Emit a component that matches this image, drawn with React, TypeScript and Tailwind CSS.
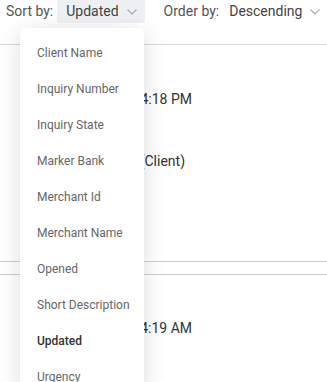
import React from 'react';

const sortFields = [
  'Client Name',
  'Inquiry Number',
  'Inquiry State',
  'Marker Bank',
  'Merchant Id',
  'Merchant Name',
  'Opened',
  'Short Description',
  'Updated',
  'Urgency',
];

function Chevron() {
  return (
    <svg width="10" height="6" viewBox="0 0 10 6" className="shrink-0">
      <polyline points="0.5,0.5 5,5 9.5,0.5" fill="none" stroke="#a3a9b8" strokeWidth="1.1" />
    </svg>
  );
}

function Select({ value, open }: { value: string; open?: boolean }) {
  return (
    <div
      className={
        'flex h-[23px] shrink-0 items-center whitespace-nowrap pl-[9px] pr-[8px] rounded-b-[3px] ' +
        (open ? 'bg-[#eef0f3]' : '')
      }
    >
      <span className="text-[#444]">{value}</span>
      <span className="ml-[8px] mt-[1px]">
        <Chevron />
      </span>
    </div>
  );
}

function Card({ lines, h }: { lines: { w: string; text: string; mt: string }[]; h: string }) {
  return (
    <div className={h + ' flow-root overflow-hidden border-b border-[#cfcfcf]'}>
      {lines.map((l, i) => (
        <div key={i} className={l.mt + ' ' + l.w + ' text-right text-[14px] leading-[18px] text-[#333] whitespace-nowrap'}>
          {l.text}
        </div>
      ))}
    </div>
  );
}

export default function App() {
  return (
    <div
      className="relative w-[327px] h-[382px] overflow-hidden bg-white text-[14px]"
      style={{ fontFamily: 'Roboto, "Liberation Sans", sans-serif' }}
    >
      {/* toolbar */}
      <div className="h-[45px] border-b border-[#d6d6d6]">
        <div className="flex items-center whitespace-nowrap pl-[6px] text-[#555]">
          <span className="shrink-0">Sort by:</span>
          <div className="ml-[4px]">
            <Select value="Updated" open />
          </div>
          <span className="ml-[19px] shrink-0">Order by:</span>
          <div className="ml-[1px]">
            <Select value="Descending" />
          </div>
        </div>
      </div>

      {/* list behind the menu */}
      <Card
        h="h-[217px]"
        lines={[
          { w: 'w-[192px]', text: '03/14/2023 4:18 PM', mt: 'mt-[45px]' },
          { w: 'w-[185px]', text: 'Maria Lopez (Client)', mt: 'mt-[44px]' },
        ]}
      />
      <div className="h-[13px] border-b border-[#cfcfcf]" />
      <Card
        h="h-[216px]"
        lines={[
          { w: 'w-[192px]', text: '03/13/2023 4:19 AM', mt: 'mt-[44px]' },
          { w: 'w-[185px]', text: 'Daniel Reyes (Client)', mt: 'mt-[44px]' },
        ]}
      />

      {/* dropdown menu */}
      <div className="absolute left-[20px] top-[28px] w-[124px] rounded-[5px] bg-white pt-[7px] shadow-[0_4px_22px_rgba(0,0,0,0.14)]">
        {sortFields.map((f) => (
          <div
            key={f}
            className={
              'flex h-[36px] items-center pl-[17px] text-[12px] whitespace-nowrap ' +
              (f === 'Updated' ? 'font-medium text-[#333]' : 'text-[#666]')
            }
          >
            {f}
          </div>
        ))}
      </div>
    </div>
  );
}
